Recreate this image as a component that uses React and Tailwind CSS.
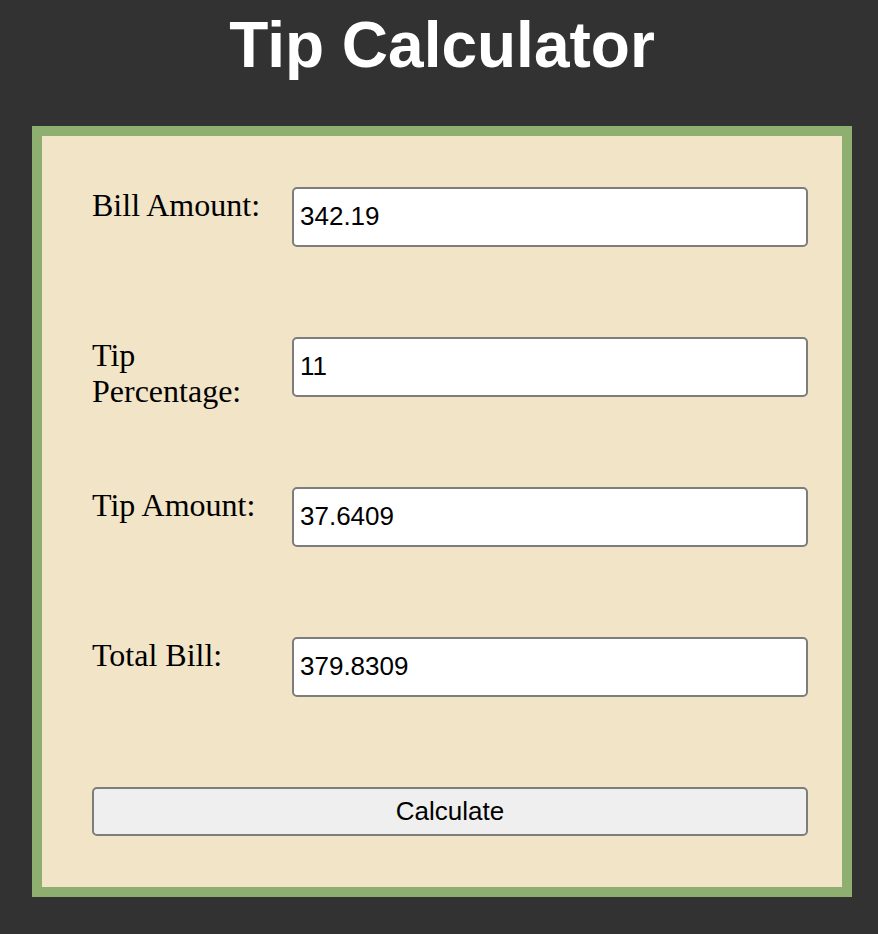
import { useState } from 'react';

const serif = { fontFamily: '"Liberation Serif", "Times New Roman", serif' };

function Row({ label, value, onChange }) {
    return (
        <div className='flex items-start h-[60px]'>
            <label className="w-[200px] pr-[20px] text-[32px] leading-[1.15] text-black" style={serif}>
                {label}
            </label>
            <input
                className="w-[516px] h-[60px] bg-white border-2 border-[#7d7d7d] rounded-[5px] px-[6px] text-[26px] text-black outline-none font-['Liberation_Sans',Arial,sans-serif]"
                value={value}
                onChange={(e) => onChange(e.target.value)}
                type="text"
            />
        </div>
    );
}

export default function App() {
    const [bill, setBill] = useState("342.19");
    const [pct, setPct] = useState("11");
    const [tip, setTip] = useState("37.6409");
    const [total, setTotal] = useState("379.8309");

    const calculate = () => {
        const b = parseFloat(bill) || 0;
        const p = parseFloat(pct) || 0;
        const t = b * p / 100;
        setTip(String(+t.toFixed(4)));
        setTotal(String(+(b + t).toFixed(4)));
    };

    return (
        <div className="min-h-[934px] bg-[#323232] pl-[32px] pt-[9px] font-['Liberation_Sans',Arial,sans-serif]">
            <div className='w-[820px]'>
                <h1 className="text-center text-white font-bold text-[64px] leading-[1.15] mb-[43px]">
                    Tip Calculator
                </h1>
                <div className='border-[10px] border-[#8faf70] bg-[#f2e4c7] pt-[51px] pb-[51px] pl-[50px] pr-[34px] flex flex-col gap-[90px]'>
                    <Row label="Bill Amount:" value={bill} onChange={setBill} />
                    <Row label="Tip Percentage:" value={pct} onChange={setPct} />
                    <Row label="Tip Amount:" value={tip} onChange={setTip} />
                    <Row label="Total Bill:" value={total} onChange={setTotal} />
                    <button
                        className="w-[716px] h-[49px] bg-[#efefef] border-2 border-[#7d7d7d] rounded-[5px] text-[26px] text-black cursor-pointer"
                        onClick={calculate}
                    >
                        Calculate
                    </button>
                </div>
            </div>
        </div>
    );
}
